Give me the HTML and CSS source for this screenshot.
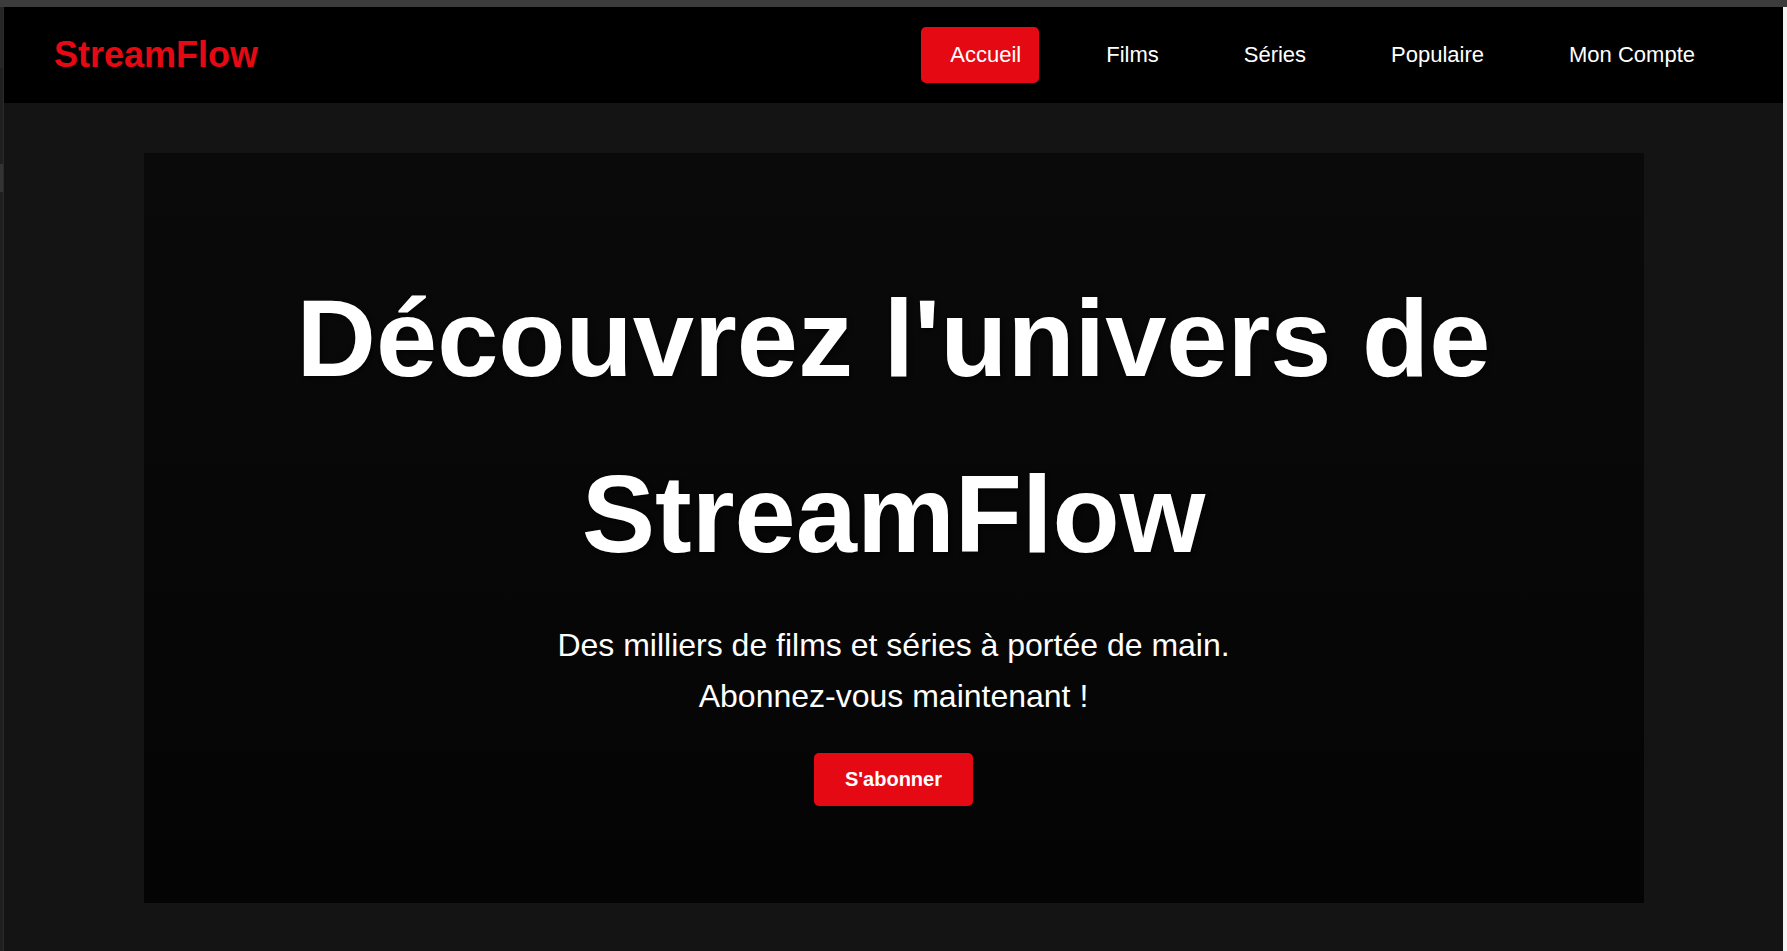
FILE: index.html
```html
<!DOCTYPE html>
<html lang="fr">
<head>
<meta charset="utf-8">
<title>StreamFlow</title>
<link rel="stylesheet" href="styles.css">
</head>
<body>
<div class="frame">
  <div class="chrome-top"></div>
  <div class="frame-body">
    <div class="chrome-left"><span class="chrome-left-top"></span><span class="chrome-left-mark"></span></div>
    <div class="page">
      <header class="site-header">
        <div class="logo">StreamFlow</div>
        <nav>
          <ul class="nav-list">
            <li><a class="nav-link active" href="#">Accueil</a></li>
            <li><a class="nav-link" href="#">Films</a></li>
            <li><a class="nav-link" href="#">Séries</a></li>
            <li><a class="nav-link" href="#">Populaire</a></li>
            <li><a class="nav-link" href="#">Mon Compte</a></li>
          </ul>
        </nav>
      </header>
      <main class="main">
        <section class="hero">
          <h1 class="hero-title">Découvrez l'univers de StreamFlow</h1>
          <p class="hero-text">Des milliers de films et séries à portée de main.<br>Abonnez-vous maintenant !</p>
          <a class="btn" href="#">S'abonner</a>
        </section>
      </main>
    </div>
    <div class="chrome-right"></div>
  </div>
</div>
</body>
</html>
```
FILE: styles.css
```css
* { box-sizing: border-box; }

html, body {
  margin: 0;
  padding: 0;
  height: 951px;
  overflow: hidden;
  background: #141414;
  font-family: "Liberation Sans", Arial, sans-serif;
  color: #fff;
}

.frame {
  display: flex;
  flex-direction: column;
  height: 951px;
}

.chrome-top {
  height: 7px;
  flex: 0 0 7px;
  background: #3c3c3c;
}

.frame-body {
  flex: 1;
  display: flex;
  min-height: 0;
}

.chrome-left {
  width: 4px;
  flex: 0 0 4px;
  background: #1f1f1f;
  border-right: 1px solid #2a2a2a;
  display: flex;
  flex-direction: column;
}

.chrome-left-top {
  display: block;
  height: 61px;
  background: #262626;
}

.chrome-left-mark {
  display: block;
  height: 28px;
  margin-top: 96px;
  background: #333;
}

.chrome-right {
  width: 4px;
  flex: 0 0 4px;
  background: #f3f3f3;
}

.page {
  flex: 1;
  min-width: 0;
  background: #141414;
}

.site-header {
  display: flex;
  justify-content: space-between;
  align-items: center;
  padding: 20px 50px;
  background: #000;
}

.logo {
  color: #e50914;
  font-size: 36px;
  font-weight: bold;
}

.nav-list {
  display: flex;
  list-style: none;
  margin: 0 1px 0 0;
  padding: 0;
}

.nav-list li {
  margin: 0 19px;
}

.nav-link {
  display: block;
  padding: 15px 18px 15px 29px;
  color: #fff;
  text-decoration: none;
  font-size: 22px;
  border-radius: 5px;
}

.nav-link.active {
  background: #e50914;
}

.main {
  padding-top: 50px;
}

.hero {
  width: 1500px;
  height: 750px;
  margin: 0 auto;
  display: flex;
  flex-direction: column;
  align-items: center;
  justify-content: center;
  text-align: center;
  background: linear-gradient(rgba(0, 0, 0, 0.5), rgba(0, 0, 0, 0.8));
}

.hero-title {
  margin: 0 0 18px;
  font-size: 110px;
  font-weight: bold;
  line-height: 1.6;
  max-width: 1300px;
  text-shadow: 2px 2px 4px rgba(0, 0, 0, 0.6);
}

.hero-text {
  margin: 0 0 31px;
  font-size: 32px;
  line-height: 1.6;
}

.btn {
  display: inline-block;
  padding: 15px 31px;
  background: #e50914;
  color: #fff;
  text-decoration: none;
  font-size: 20px;
  font-weight: bold;
  border-radius: 5px;
}
```
